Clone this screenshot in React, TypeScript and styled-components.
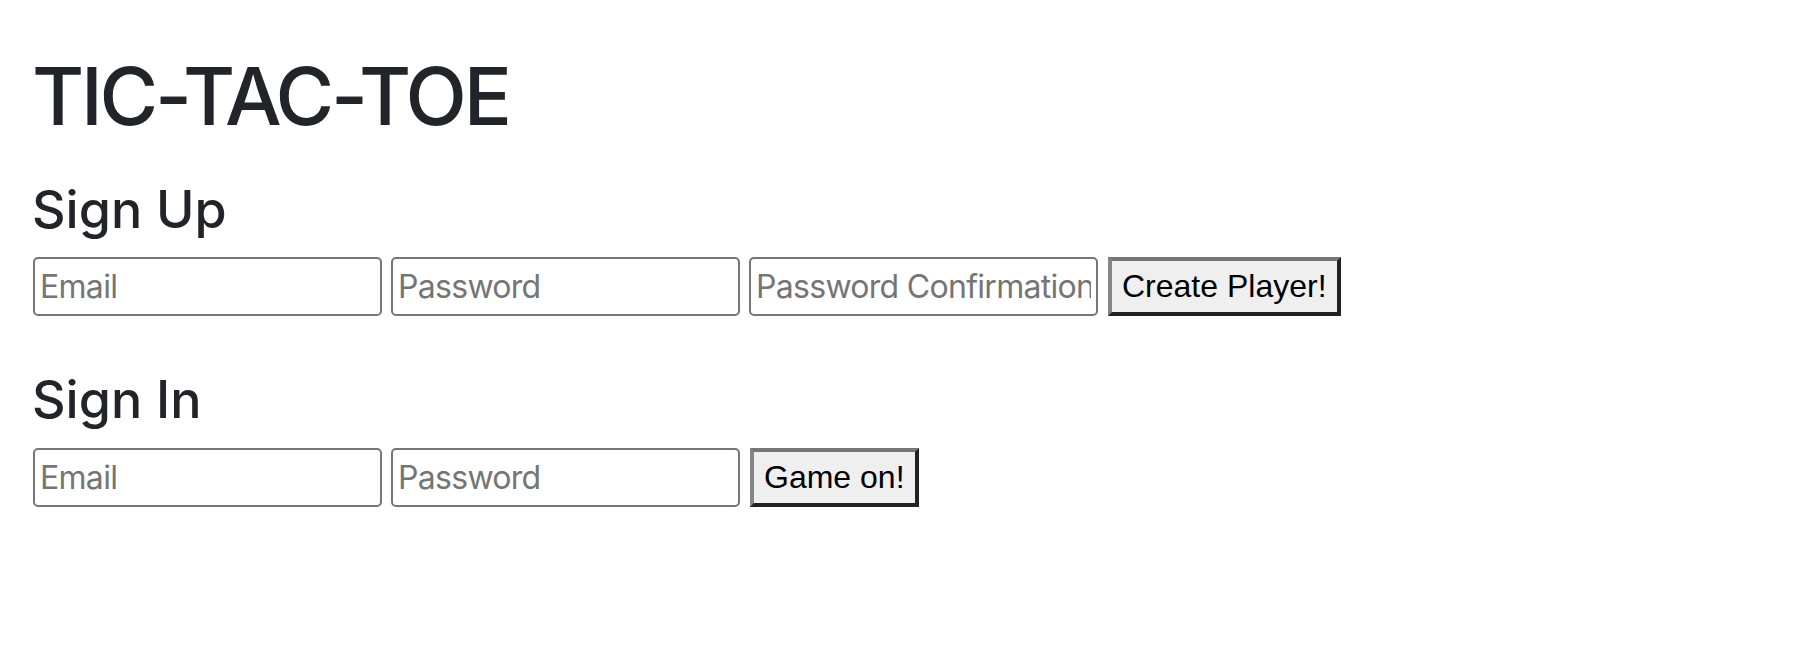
import React from "react";
import styled, { createGlobalStyle } from "styled-components";

const GlobalStyle = createGlobalStyle`
  html, body {
    margin: 0;
    padding: 0;
    background: #ffffff;
  }
  body {
    font-family: Inter, "Noto Sans", sans-serif;
    color: #212529;
  }
`;

const Page = styled.main`
  padding: 48px 32px 0 32px;
  display: flex;
  flex-direction: column;
  align-items: flex-start;
`;

const Title = styled.h1`
  margin: 0;
  font-family: Inter, sans-serif;
  font-weight: 500;
  font-size: 80px;
  line-height: 1.2;
  letter-spacing: -3.2px;
  color: #212529;
`;

const Section = styled.section<{ $top: number }>`
  margin-top: ${(p) => p.$top}px;
  display: flex;
  flex-direction: column;
  align-items: flex-start;
`;

const Heading = styled.h3`
  margin: 0 0 16px 0;
  font-family: Inter, sans-serif;
  font-weight: 500;
  font-size: 52px;
  line-height: 1.2;
  letter-spacing: 0;
  color: #212529;
`;

const Row = styled.form`
  display: flex;
  align-items: stretch;
  gap: 9px;
  margin-left: 1px;
`;

const Field = styled.input`
  box-sizing: border-box;
  width: 349px;
  height: 59px;
  margin: 0;
  padding: 0 5px;
  border: 2px solid #767676;
  border-radius: 5px;
  background: #ffffff;
  font-family: Inter, sans-serif;
  font-size: 32px;
  letter-spacing: -0.7px;
  color: #212529;
  outline: none;
  &::placeholder {
    color: #757575;
    opacity: 1;
  }
`;

const Submit = styled.button`
  box-sizing: border-box;
  height: 59px;
  margin: 0 0 0 1px;
  padding: 0 10px;
  border-style: solid;
  border-width: 4px;
  border-color: #767676 #222222 #222222 #858585;
  border-radius: 0;
  background: #efefef;
  font-family: "Liberation Sans", Arial, sans-serif;
  font-size: 32px;
  color: #000000;
  cursor: pointer;
`;

export default function App() {
  return (
    <>
      <GlobalStyle />
      <Page>
        <Title>TIC-TAC-TOE</Title>
        <Section $top={35}>
          <Heading>Sign Up</Heading>
          <Row onSubmit={(e) => e.preventDefault()}>
            <Field type="email" placeholder="Email" />
            <Field type="password" placeholder="Password" />
            <Field type="password" placeholder="Password Confirmation" />
            <Submit type="submit">Create Player!</Submit>
          </Row>
        </Section>
        <Section $top={53}>
          <Heading>Sign In</Heading>
          <Row onSubmit={(e) => e.preventDefault()}>
            <Field type="email" placeholder="Email" />
            <Field type="password" placeholder="Password" />
            <Submit type="submit">Game on!</Submit>
          </Row>
        </Section>
      </Page>
    </>
  );
}
